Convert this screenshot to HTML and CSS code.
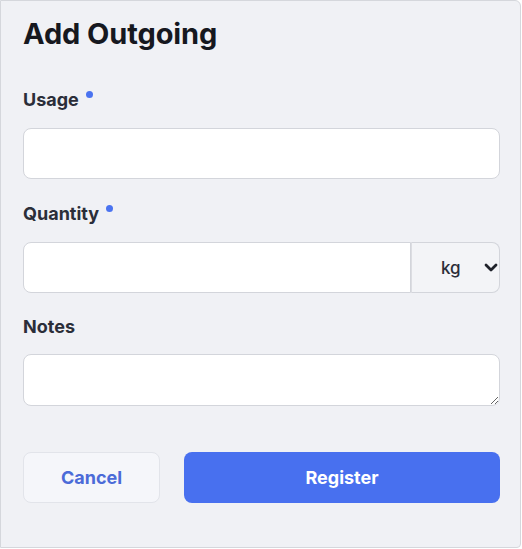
FILE: index.html
```html
<!DOCTYPE html>
<html lang="en">
<head>
    <meta charset="UTF-8">
    <meta name="viewport" content="width=device-width, initial-scale=1.0">
    <title>Add Outgoing</title>
    <link rel="stylesheet" href="styles.css">
</head>
<body>
    <div class="modal">
        <h1>Add Outgoing</h1>

        <form class="form" onsubmit="return false">
            <div class="field">
                <label for="usage" class="label required">Usage</label>
                <input id="usage" type="text" class="input">
            </div>

            <div class="field field-qty">
                <label for="quantity" class="label required">Quantity</label>
                <div class="group">
                    <input id="quantity" type="text" class="input group-input">
                    <div class="unit">
                        <select class="unit-select">
                            <option>kg</option>
                            <option>g</option>
                            <option>L</option>
                        </select>
                        <svg class="chevron" width="14" height="9" viewBox="0 0 14 9">
                            <path d="M2 2l5 5 5-5" fill="none" stroke="#1f222b" stroke-width="2.8" stroke-linecap="round" stroke-linejoin="round"/>
                        </svg>
                    </div>
                </div>
            </div>

            <div class="field field-last">
                <label for="notes" class="label label-notes">Notes</label>
                <textarea id="notes" class="input textarea"></textarea>
            </div>

            <div class="actions">
                <button type="button" class="btn btn-cancel">Cancel</button>
                <button type="submit" class="btn btn-primary">Register</button>
            </div>
        </form>
    </div>
</body>
</html>
```

FILE: styles.css
```css
body {
    margin: 0;
    padding: 0;
    background: #ffffff;
    font-family: 'Inter', 'Noto Sans', sans-serif;
    color: #2b2e39;
}
.modal {
    box-sizing: border-box;
    width: 521px;
    height: 548px;
    padding: 16px 20px 0 22px;
    background: #f0f1f5;
    border: 1px solid #d5d7dc;
    border-radius: 0 6px 4px 0;
}
h1 {
    margin: 0 0 39px 0;
    font-size: 29px;
    line-height: 34px;
    font-weight: 700;
    color: #16181f;
    letter-spacing: -0.1px;
}
.field {
    margin-bottom: 25px;
}
.field-qty {
    margin-bottom: 24px;
}
.field-last {
    margin-bottom: 46px;
}
.label {
    display: flex;
    align-items: flex-start;
    height: 20px;
    margin-bottom: 18px;
    font-size: 18px;
    line-height: 20px;
    font-weight: 700;
    color: #2b2e39;
}
.label-notes {
    margin-bottom: 17px;
}
.required::after {
    content: "";
    width: 7px;
    height: 7px;
    margin: 1px 0 0 7px;
    border-radius: 50%;
    background: #4a73f0;
}
.input {
    display: block;
    box-sizing: border-box;
    width: 100%;
    height: 51px;
    padding: 0 14px;
    border: 1px solid #d3d5db;
    border-radius: 8px;
    background: #ffffff;
    font-family: inherit;
    font-size: 16px;
    outline: none;
}
.group {
    display: flex;
    height: 51px;
}
.group-input {
    flex: 1;
    border-radius: 8px 0 0 8px;
}
.unit {
    position: relative;
    width: 89px;
}
.unit-select {
    box-sizing: border-box;
    width: 100%;
    height: 51px;
    padding: 0 0 0 30px;
    -webkit-appearance: none;
    appearance: none;
    border: 1px solid #d3d5db;
    border-left: none;
    border-radius: 0 8px 8px 0;
    background: #f3f4f7;
    font-family: inherit;
    font-size: 17px;
    font-weight: 500;
    color: #2b2e39;
    outline: none;
}
.unit::before {
    content: "";
    position: absolute;
    left: 0;
    top: 0;
    bottom: 0;
    border-left: 1px solid #dcdde2;
}
.chevron {
    position: absolute;
    right: 2px;
    top: 21px;
    pointer-events: none;
}
.textarea {
    height: 52px;
    padding: 10px 14px;
}
.actions {
    display: flex;
    gap: 24px;
}
.btn {
    height: 51px;
    border-radius: 8px;
    font-family: inherit;
    font-size: 18px;
    font-weight: 700;
    cursor: pointer;
}
.btn-cancel {
    width: 137px;
    background: #f5f6fa;
    border: 1px solid #e2e4ea;
    color: #4b6bd8;
}
.btn-primary {
    flex: 1;
    background: #4870ef;
    border: none;
    color: #ffffff;
}
.btn-primary:hover {
    background: #3f66e4;
}
```
